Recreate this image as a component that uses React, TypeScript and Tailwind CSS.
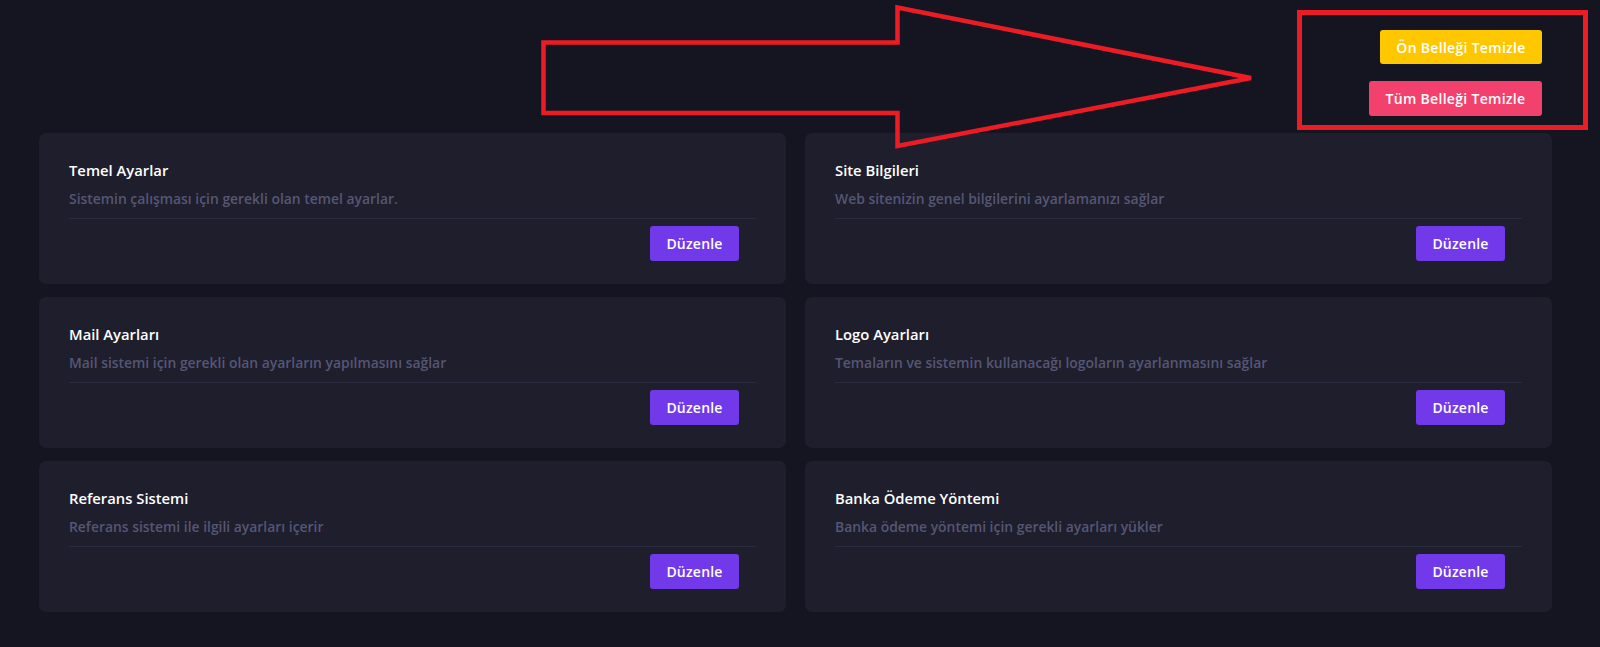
import React from "react";

const cards = [
  ["Temel Ayarlar", "Sistemin çalışması için gerekli olan temel ayarlar."],
  ["Site Bilgileri", "Web sitenizin genel bilgilerini ayarlamanızı sağlar"],
  ["Mail Ayarları", "Mail sistemi için gerekli olan ayarların yapılmasını sağlar"],
  ["Logo Ayarları", "Temaların ve sistemin kullanacağı logoların ayarlanmasını sağlar"],
  ["Referans Sistemi", "Referans sistemi ile ilgili ayarları içerir"],
  ["Banka Ödeme Yöntemi", "Banka ödeme yöntemi için gerekli ayarları yükler"],
];

function Card({ title, desc }: { title: string; desc: string }) {
  return (
    <div className="bg-[#1e1e2d] rounded-[7px] h-[151px] px-[30px] pt-[26px] flex flex-col">
      <div className="text-white text-[14.8px] leading-[22px] font-semibold">{title}</div>
      <div className="text-[#565674] text-[13.9px] leading-[20px] font-semibold mt-[8px]">{desc}</div>
      <div className="h-px bg-[#2b2b40] mt-[9px]"></div>
      <div className="flex justify-end mt-[7px] pr-[17px]">
        <button className="bg-[#7239ea] text-white rounded-[3px] w-[89px] h-[35px] text-[14px] tracking-[0.2px] font-semibold">
          Düzenle
        </button>
      </div>
    </div>
  );
}

export default function App() {
  return (
    <div
      className="relative min-h-[647px] bg-[#151521] pl-[39px] pr-[48px] pt-[30px] overflow-hidden"
      style={{ fontFamily: '"Open Sans", "Noto Sans", sans-serif' }}
    >
      <div className="flex flex-col items-end gap-[17px] pr-[10px]">
        <button className="bg-[#ffc700] text-white rounded-[3px] w-[162px] h-[34px] text-[14px] tracking-[0.3px] font-semibold">
          Ön Belleği Temizle
        </button>
        <button className="bg-[#f1416c] text-white rounded-[3px] w-[173px] h-[35px] text-[14px] tracking-[0.3px] font-semibold">
          Tüm Belleği Temizle
        </button>
      </div>
      <div className="grid grid-cols-2 gap-x-[19px] gap-y-[13px] mt-[17px]">
        {cards.map(([t, d]) => (
          <Card key={t} title={t} desc={d} />
        ))}
      </div>

      <svg
        className="absolute left-0 top-0 pointer-events-none"
        width="1600"
        height="647"
        viewBox="0 0 1600 647"
      >
        <polygon
          points="543.5,42.5 897.5,42.5 897.5,7.5 1251,78 897.5,146 897.5,113 543.5,113"
          fill="none"
          stroke="#ed1c24"
          strokeWidth="4.5"
          strokeLinejoin="miter"
        />
      </svg>
      <div className="absolute left-[1297px] top-[10px] w-[291px] h-[120px] border-[5px] border-[#ed1c24] pointer-events-none"></div>
    </div>
  );
}
